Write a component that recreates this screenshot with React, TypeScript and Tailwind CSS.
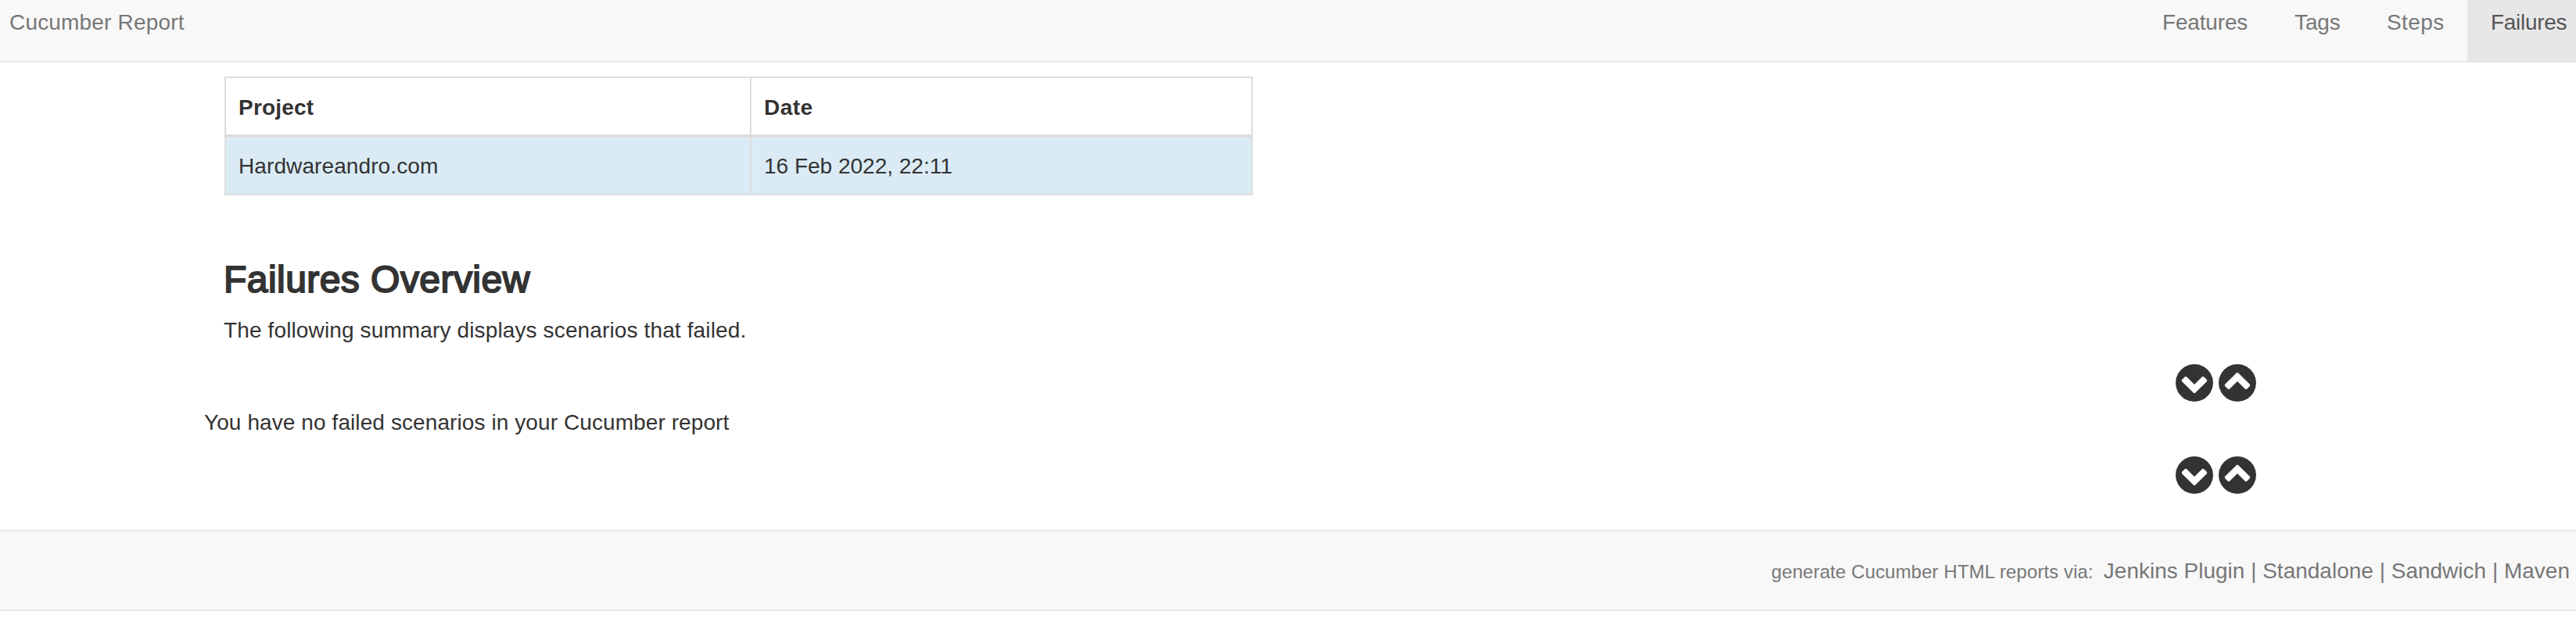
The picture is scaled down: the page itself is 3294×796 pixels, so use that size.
type ChevronProps = { up?: boolean };

function ChevronCircle({ up = false }: ChevronProps) {
  return (
    <svg viewBox="0 128 1536 1536" className="size-12" fill="currentColor" aria-hidden="true">
      <path
        transform={up ? "matrix(1 0 0 -1 0 1792)" : undefined}
        d="M813 1299l454-454q19-19 19-45t-19-45l-102-102q-19-19-45-19t-45 19l-307 307-307-307q-19-19-45-19t-45 19l-102 102q-19 19-19 45t19 45l454 454q19 19 45 19t45-19zM1536 896q0 209-103 385.500t-279.500 279.500-385.500 103-385.500-103-279.500-279.500-103-385.500 103-385.500 279.500-279.500 385.500-103 385.500 103 279.500 279.500 103 385.500z"
      />
    </svg>
  );
}

function ExpandControls() {
  return (
    <div className="ml-[2782px] flex h-12 gap-[7px]">
      <button type="button" aria-label="Expand all">
        <ChevronCircle />
      </button>
      <button type="button" aria-label="Collapse all">
        <ChevronCircle up />
      </button>
    </div>
  );
}

const tabs = [
  { label: "Features", style: "w-[169px] tracking-[-0.17px]" },
  { label: "Tags", style: "w-[118px] tracking-[-0.1px]" },
  { label: "Steps", style: "w-[133px] tracking-[0.4px]" },
  { label: "Failures", style: "w-[139px] bg-[#e7e7e7] text-[#555] tracking-[-0.3px]" },
];

export default function App() {
  return (
    <div className="h-[796px] w-full overflow-hidden bg-white font-['Liberation_Sans',Arial,sans-serif] text-[28px] leading-10 text-[#333]">
      <nav className="flex h-20 justify-between bg-[#f8f8f8] text-[#777] shadow-[inset_0_-2px_0_#e7e7e7]">
        <a className="pt-[9px] pl-3 tracking-[0.18px]">Cucumber Report</a>
        <ul className="flex">
          {tabs.map((tab) => (
            <li key={tab.label} className={`h-20 pt-[9px] pl-[30px] whitespace-nowrap ${tab.style}`}>
              {tab.label}
            </li>
          ))}
        </ul>
      </nav>

      <main className="h-[598px] pt-[18px]">
        <div className="ml-[287px] grid h-[152px] w-[1315px] grid-cols-[672px_1fr] border-2 border-[#ddd] whitespace-nowrap">
          <div className="h-[76px] border-r-2 border-b-4 border-[#ddd] pt-[18px] pl-4 font-bold tracking-[0.2px]">Project</div>
          <div className="h-[76px] border-b-4 border-[#ddd] pt-[18px] pl-4 font-bold tracking-[0.5px]">Date</div>
          <div className="h-[72px] border-r-2 border-[#ddd] bg-[#daebf5] pt-[17px] pl-4 tracking-[0.1px]">Hardwareandro.com</div>
          <div className="h-[72px] bg-[#daebf5] pt-[17px] pl-4">16 Feb 2022, 22:11</div>
        </div>

        <h2 className="mt-[81px] ml-[286px] text-[48px] leading-[53px] font-normal tracking-[0.45px] [-webkit-text-stroke:2px_#333]">
          Failures Overview
        </h2>
        <p className="mt-[19px] ml-[286px] tracking-[0.13px]">
          The following summary displays scenarios that failed.
        </p>

        <div className="mt-[23px]">
          <ExpandControls />
          <p className="mt-[7px] mb-[23px] ml-[261px] tracking-[0.09px]">You have no failed scenarios in your Cucumber report</p>
          <ExpandControls />
        </div>
      </main>

      <footer className="flex h-[104px] items-baseline justify-end border-y-2 border-[#e7e7e7] bg-[#f8f8f8] pt-[31px] pr-2 whitespace-nowrap text-[#777]">
        <span className="mr-[13px] text-2xl leading-10 tracking-[0.09px]">generate Cucumber HTML reports via:</span>
        <span>Jenkins Plugin | Standalone | Sandwich | Maven</span>
      </footer>
    </div>
  );
}
